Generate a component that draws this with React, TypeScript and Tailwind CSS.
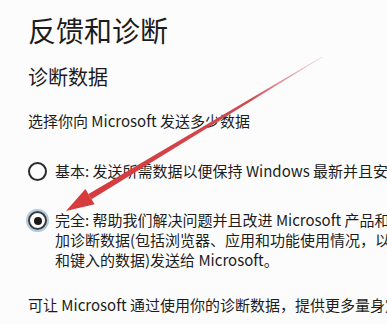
import React from 'react';

const font = { fontFamily: "'Noto Sans CJK SC', 'Noto Sans', sans-serif" };

function Radio({ checked }: { checked?: boolean }) {
  return checked ? (
    <span className="mt-[1px] flex h-[19px] w-[19px] shrink-0 items-center justify-center rounded-full border-2 border-[#3a3a3a] ring-2 ring-[#aecbe2]">
      <span className="h-[8px] w-[8px] rounded-full bg-[#1a1a1a]" />
    </span>
  ) : (
    <span className="mt-[1px] h-[19px] w-[19px] shrink-0 rounded-full border-2 border-[#2a2a2a]" />
  );
}

export default function App() {
  return (
    <div className="relative h-[324px] w-[387px] overflow-hidden bg-[#fcfcfc] text-[#1c1c1c]" style={font}>
      <div className="flex flex-col pl-[28px] pt-[13px] whitespace-nowrap">
        <h1 className="text-[28px] leading-[34px] font-normal">反馈和诊断</h1>
        <h2 className="mt-[16px] text-[20px] leading-[28px] font-normal">诊断数据</h2>
        <p className="mt-[20px] text-[15px] leading-[20px]">选择你向 Microsoft 发送多少数据</p>

        <div className="mt-[30px] flex items-start gap-[8px]">
          <Radio />
          <p className="text-[15px] leading-[20px]">基本: 发送所需数据以便保持 Windows 最新并且安全</p>
        </div>

        <div className="mt-[29px] flex items-start gap-[8px]">
          <Radio checked />
          <p className="text-[15px] leading-[20px]">
            完全: 帮助我们解决问题并且改进 Microsoft 产品和服务。
            <br />
            加诊断数据(包括浏览器、应用和功能使用情况，以及你
            <br />
            和键入的数据)发送给 Microsoft。
          </p>
        </div>

        <p className="mt-[25px] text-[15px] leading-[20px]">可让 Microsoft 通过使用你的诊断数据，提供更多量身定制的体验</p>
      </div>

      {/* red annotation arrow */}
      <svg className="pointer-events-none absolute inset-0" width="387" height="324" viewBox="0 0 387 324">
        <defs>
          <linearGradient id="shaft" x1="322" y1="57" x2="88" y2="198" gradientUnits="userSpaceOnUse">
            <stop offset="0" stopColor="#d9a0a6" stopOpacity="0.4" />
            <stop offset="0.3" stopColor="#cf4a4f" />
            <stop offset="1" stopColor="#d63b3e" />
          </linearGradient>
        </defs>
        <polygon points="322.2,57.3 321.8,56.7 88.5,194.0 91.5,199.2" fill="url(#shaft)" />
        <polygon points="66,211 85.4,188.9 94.6,204.3" fill="#d63b3e" />
      </svg>
    </div>
  );
}
